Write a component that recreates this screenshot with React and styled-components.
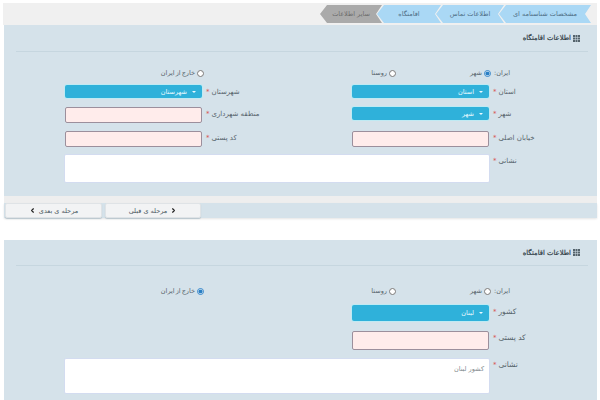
import React from "react"
import styled, { createGlobalStyle } from "styled-components"
import { ChevronLeft, ChevronRight } from "lucide-react"

const GlobalStyle = createGlobalStyle`
  html, body {
    margin: 0;
    padding: 0;
    background: #fff;
    width: 600px;
    height: 400px;
    overflow: hidden;
    font-family: "DejaVu Sans", "Noto Sans", sans-serif;
  }
`

const Page = styled.div`
  display: flex;
  flex-direction: column;
  padding-top: 3px;
`

const StepBar = styled.div`
  display: flex;
  flex-direction: row-reverse;
  align-items: center;
  height: 22px;
  margin: 0 3px;
  padding-right: 6px;
  background: #f0f0f0;
`

const Step = styled.div`
  display: flex;
  align-items: center;
  justify-content: center;
  width: ${(p) => p.$w}px;
  height: 18px;
  margin-left: -5px;
  font-size: 6.5px;
  color: ${(p) => (p.$off ? "#6d6d6d" : "#4f6f86")};
  background: ${(p) => (p.$off ? "#aaaaaa" : "#aad8f5")};
  clip-path: polygon(7px 0, 100% 0, calc(100% - 6px) 50%, 100% 100%, 7px 100%, 0 50%);
`

const Panel = styled.section`
  margin: 0 3px 0 4px;
  height: ${(p) => p.$h}px;
  background: #d5e2ea;
  overflow: hidden;
`

const PanelHead = styled.div`
  display: flex;
  align-items: center;
  justify-content: flex-end;
  gap: 2px;
  height: ${(p) => p.$h}px;
  margin: 0 9px 0 12px;
  padding-right: 8px;
  border-bottom: 1px solid #c6d6df;
  font-size: 6.8px;
  color: #2f3d46;
  -webkit-text-stroke: 0.2px #2f3d46;
`

const RadioRow = styled.div`
  display: grid;
  grid-template-columns: 139px 192px 95px auto;
  align-items: center;
  margin: ${(p) => p.$top}px 0 0 61px;
  height: 12px;
  font-size: 6.5px;
  color: #55626a;
`

const RadioItem = styled.label`
  display: inline-flex;
  align-items: center;
  justify-self: end;
  gap: 2px;
  word-spacing: -1px;
`

const RadioDot = styled.input.attrs({ type: "radio", readOnly: true })`
  width: 7px;
  height: 7px;
  margin: 0;
  accent-color: #2a7fc4;
`

const RadioTitle = styled.span`
  justify-self: start;
  padding-left: 3px;
`

const FormGrid = styled.div`
  display: grid;
  grid-template-columns: 137px 150px 137px auto;
  grid-template-rows: ${(p) => p.$rows};
  row-gap: 7px;
  margin: ${(p) => p.$top}px 0 0 61px;
`

const FieldLabel = styled.label`
  display: inline-flex;
  justify-self: start;
  gap: 2px;
  margin-left: 4px;
  padding-top: 2px;
  font-size: ${(p) => p.$size}px;
  line-height: 10px;
  color: #55626a;
  &::after {
    content: "*";
    color: #d9534f;
    font-size: 7px;
  }
`

const Select = styled.div`
  display: flex;
  align-items: center;
  gap: 5px;
  height: ${(p) => p.$h}px;
  padding-right: 6px;
  border-radius: 2px;
  background: #2fb1da;
  box-shadow: 0 0 0 1px #bfeaf3;
  color: #eafaff;
  font-size: 6.5px;
  &::before {
    content: "";
    border: 2px solid transparent;
    border-top: 2.5px solid #eafaff;
    border-bottom: 0;
  }
`

const TextBox = styled.div`
  height: ${(p) => p.$h}px;
  box-sizing: border-box;
  border: 1px solid #9c8f9c;
  border-radius: 2px;
  background: #ffeceb;
`

const AreaBox = styled.div`
  grid-column: 1 / 4;
  box-sizing: border-box;
  margin: 0 -1px;
  padding: 6px 5px;
  border: 1px solid #d3dcf0;
  border-radius: 2px;
  background: #fff;
  font-size: 6.5px;
  color: #858b8f;
`

const Strip = styled.div`
  height: 7px;
  margin: 0 3px 0 4px;
  background: #eeeeee;
`

const Footer = styled.div`
  display: flex;
  gap: 3px;
  height: 15px;
  margin: 0 3px 0 4px;
  padding-left: 1px;
  background: #d5e2ea;
  box-shadow: 0 1px 2px #e4e4e4;
`

const NavButton = styled.button`
  display: flex;
  align-items: center;
  justify-content: center;
  gap: 3px;
  width: ${(p) => p.$w}px;
  padding: 0;
  border: 1px solid #dfe3e6;
  border-radius: 2px;
  background: #f2f3f4;
  box-shadow: 0 1px 1px #b9c6ce;
  font-family: inherit;
  font-size: 6.5px;
  color: #4a5860;
`

const Gap = styled.div`
  height: 22px;
`

const Label = ({ children, size = 7 }) => (
  <FieldLabel dir="rtl" $size={size}>
    {children}
  </FieldLabel>
)

const Radio = ({ text, checked }) => (
  <RadioItem dir="rtl">
    <RadioDot checked={checked} />
    {text}
  </RadioItem>
)

const Radios = ({ top, active }) => (
  <RadioRow $top={top}>
    <Radio text="خارج از ایران" checked={active === "out"} />
    <Radio text="روستا" checked={false} />
    <Radio text="شهر" checked={active === "city"} />
    <RadioTitle dir="rtl">ایران:</RadioTitle>
  </RadioRow>
)

const GridIcon = () => (
  <svg width="7" height="7" viewBox="0 0 7 7" fill="#55636c">
    {[0, 2.5, 5].map((y) =>
      [0, 2.5, 5].map((x) => <rect key={`${x}-${y}`} x={x} y={y} width="2" height="2" />)
    )}
  </svg>
)

const Head = ({ h }) => (
  <PanelHead $h={h}>
    <span dir="rtl">اطلاعات اقامتگاه</span>
    <GridIcon />
  </PanelHead>
)

export default function App() {
  return (
    <Page>
      <GlobalStyle />
      <StepBar>
        <Step $w={92} dir="rtl">مشخصات شناسنامه ای</Step>
        <Step $w={68} dir="rtl">اطلاعات تماس</Step>
        <Step $w={64} dir="rtl">اقامتگاه</Step>
        <Step $w={62} $off dir="rtl">سایر اطلاعات</Step>
      </StepBar>

      <Panel $h={171}>
        <Head h={26} />
        <Radios top={15} active="city" />
        <FormGrid $top={6} $rows="15px 17px 16px 29px">
          <Select $h={13} dir="rtl">شهرستان</Select>
          <Label>شهرستان</Label>
          <Select $h={13} dir="rtl">استان</Select>
          <Label>استان</Label>

          <TextBox $h={16} />
          <Label>منطقه شهرداری</Label>
          <Select $h={13} dir="rtl">شهر</Select>
          <Label>شهر</Label>

          <TextBox $h={16} />
          <Label>کد پستی</Label>
          <TextBox $h={16} />
          <Label>خیابان اصلی</Label>

          <AreaBox />
          <Label>نشانی</Label>
        </FormGrid>
      </Panel>
      <Strip />
      <Footer>
        <NavButton $w={97} dir="rtl">
          مرحله ی بعدی
          <ChevronLeft size={7} strokeWidth={4} color="#222" />
        </NavButton>
        <NavButton $w={96} dir="rtl">
          <ChevronRight size={7} strokeWidth={4} color="#222" />
          مرحله ی قبلی
        </NavButton>
      </Footer>
      <Gap />

      <Panel $h={160}>
        <Head h={25} />
        <Radios top={19} active="out" />
        <FormGrid $top={8} $rows="19px 20px 36px">
          <div />
          <div />
          <Select $h={16} dir="rtl">لبنان</Select>
          <Label size={7.5}>کشور</Label>

          <div />
          <div />
          <TextBox $h={19} />
          <Label size={7.5}>کد پستی</Label>

          <AreaBox dir="rtl">کشور لبنان</AreaBox>
          <Label size={7.5}>نشانی</Label>
        </FormGrid>
      </Panel>
    </Page>
  )
}
